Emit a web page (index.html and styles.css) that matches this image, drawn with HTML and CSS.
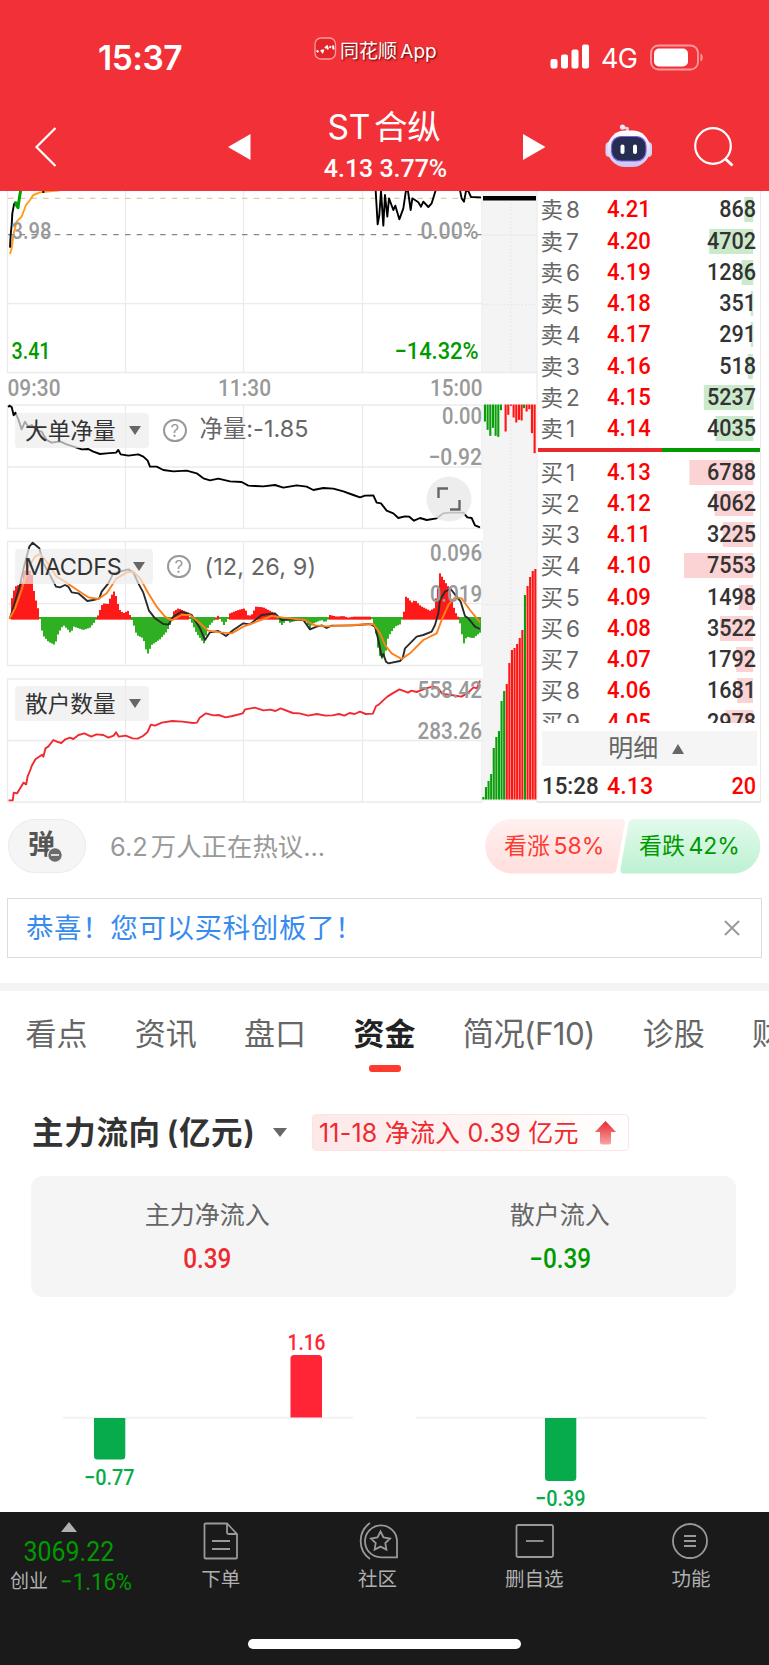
FILE: index.html
```html
<!DOCTYPE html>
<html lang="zh-CN">
<head>
<meta charset="utf-8">
<title>ST合纵</title>
<link rel="stylesheet" href="styles.css">
</head>
<body>
<header class="header">
  <div class="status">
    <span class="clock">15:37</span>
    <span class="app">
      <svg width="23" height="23" viewBox="0 0 23 23"><rect x="1" y="1" width="20.500" height="21" rx="6" fill="#e3242b" stroke="#ff9a9c" stroke-width="1.300"/><path d="M2.500 13.500l2 1.500M7 13l1.500 2 1-2.500M11 11l2-1.500 1 3M16 11l.5-2M19 8.500l.5 4" stroke="#fff" stroke-width="2" fill="none"/></svg>
      同花顺 App
    </span>
    <span class="radio">
      <svg width="40" height="26" viewBox="0 0 40 26" fill="#fff"><rect x="0.500" y="15" width="7" height="9.500" rx="2"/><rect x="11" y="10.500" width="7" height="14" rx="2"/><rect x="21.500" y="5.500" width="7" height="19" rx="2"/><rect x="32" y="0.500" width="7" height="24" rx="2"/></svg>
      <span class="net">4G</span>
      <svg width="54" height="27" viewBox="0 0 54 27"><rect x="1" y="1.500" width="47" height="24" rx="7.500" fill="none" stroke="#fa9a9d" stroke-width="1.800"/><rect x="4" y="4.500" width="34" height="18" rx="5" fill="#fff"/><path d="M50.500 9.500c3 1 3 7 0 8z" fill="#fa9a9d"/></svg>
    </span>
  </div>
  <nav class="titlebar">
    <svg class="back" width="24" height="42" viewBox="0 0 24 42"><path d="M21.500 2L2.500 21l19 19" fill="none" stroke="#fff" stroke-width="2.200"/></svg>
    <svg class="prev" width="23" height="26" viewBox="0 0 23 26"><path d="M22.500 0v26L0 13z" fill="#fff"/></svg>
    <div class="stock"><div class="name">ST 合纵</div><div class="quote">4.13 3.77%</div></div>
    <svg class="next" width="23" height="26" viewBox="0 0 23 26"><path d="M0 0v26l22.500-13z" fill="#fff"/></svg>
    <svg class="robot" width="50" height="44" viewBox="0 0 50 44">
      <defs><linearGradient id="rb" x2="0" y2="1"><stop offset="0" stop-color="#fff"/><stop offset="1" stop-color="#c9c6f2"/></linearGradient></defs>
      <path d="M23.500 9V4.500l-5-1.200" fill="none" stroke="#dcdaf5" stroke-width="2.500"/><circle cx="18.500" cy="3" r="2.600" fill="#e8e6fa"/>
      <rect x="1.500" y="18" width="8" height="15" rx="4" fill="#d4d1f4"/><rect x="40" y="18" width="8" height="15" rx="4" fill="#d4d1f4"/>
      <rect x="3.500" y="6.500" width="42.500" height="36.500" rx="17.500" fill="url(#rb)"/>
      <rect x="7.500" y="12.500" width="34.500" height="24.500" rx="9.500" fill="#252d52" stroke="#7a5fe0" stroke-width="1.200"/>
      <rect x="16.500" y="20.500" width="4" height="9.500" rx="2" fill="#fff"/><rect x="29" y="20.500" width="4" height="9.500" rx="2" fill="#fff"/>
    </svg>
    <svg class="search" width="42" height="42" viewBox="0 0 42 42" fill="none" stroke="#fff" stroke-width="2.200"><circle cx="20" cy="20" r="17.800"/><path d="M32 32.500l7.500 7" stroke-width="2.800"/></svg>
  </nav>
</header>

<main>
<section class="market">
  <div class="charts">
    <svg id="plot" width="538" height="613" viewBox="0 191 538 613">
      <rect x="483" y="191" width="53.500" height="181" fill="#f4f4f4"/>
      <rect x="483" y="404" width="53.500" height="397" fill="#f4f4f4"/>
      <g fill="none" stroke="#ebebeb" stroke-width="1.300">
        <path d="M7.500 191V372.500H537M7.500 303.700H482M125.500 191V372M243.500 191V372M362.500 191V372M482 191V372"/>
        <path d="M7.500 405H482V528.300H7.500zM7.500 467H482M125.500 405V528M243.500 405V528M362.500 405V528"/>
        <path d="M7.500 541.500H482V665.500H7.500zM7.500 603.600H482M125.500 541V665M243.500 541V665M362.500 541V665"/>
        <path d="M7.500 679H482V802H7.500zM7.500 740.500H482M125.500 679V802M243.500 679V802M362.500 679V802"/>
        <path d="M483 235H536M537 191V803" />
        <path d="M510.700 203V372M510.700 405V801M483 304.500H536M483 604.700H536" stroke-dasharray="1.500 2" stroke="#e6e6e6"/>
      </g>
      <path d="M8 198.300H482" stroke="#e3c9a4" stroke-dasharray="5.500 6.200" stroke-width="1.300"/>
      <path d="M8 234.600H482" stroke="#888" stroke-dasharray="5.500 6.200" stroke-width="1.300"/>
      <path d="M483 198.300H536" stroke="#000" stroke-width="4.500"/>
      <g class="ln" transform="translate(0 185) scale(.33333)">
        <polyline stroke="#ff9c1a" points="30,207 35,190 40,150 50,110 65,95 78,60 90,45 100,30 120,22 180,16"/>
        <polyline stroke="#000" points="30,188 32,150 35,120 37,85 42,58 47,50"/>
        <polyline class="thick" stroke="#00a000" points="46,50 50,62 54,68 58,40 62,16"/>
        <path d="M130 17v7" stroke="#000"/>
        <polyline stroke="#000" points="1127,16 1133,118 1138,90 1143,18 1150,122 1155,30 1162,95 1167,40 1180,75 1186,62 1198,103 1210,70 1218,16 1224,18 1232,75 1237,40 1255,52 1263,65 1270,50 1285,66 1295,55 1307,16"/>
        <polyline stroke="#000" points="1380,16 1385,40 1392,50 1398,18 1404,16 1413,36 1443,37"/>
      </g>
      <g class="ln" transform="translate(0 400) scale(.33333)">
        <polyline stroke="#000" points="25,22 28,17 35,21 41,46 46,38 55,58 65,88 75,65 85,80 95,75 110,92 125,95 140,120 155,128 180,124 200,133 230,143 245,148 265,147 280,155 300,162 320,160 348,158 355,150 362,163 385,167 415,163 430,170 443,182 450,200 470,200 490,210 520,214 560,212 590,220 610,235 630,241 655,236 690,244 725,246 745,257 765,258 790,259 825,255 850,263 890,256 920,260 940,270 970,264 1000,266 1030,274 1060,285 1080,292 1095,287 1120,286 1130,308 1143,310 1160,332 1180,340 1195,354 1215,349 1228,350 1242,362 1260,354 1280,360 1310,355 1330,340 1350,338 1390,338 1402,352 1415,354 1425,376 1440,382"/>
      </g>
      <g id="macd" transform="translate(0 400) scale(.33333)"></g>
      <g class="ln" transform="translate(0 400) scale(.33333)">
        <polyline stroke="#2a2a2a" points="30,655 45,605 60,555 72,500 88,440 98,428 118,445 130,490 150,525 168,560 180,562 195,555 205,560 215,577 235,580 262,603 280,600 298,595 305,575 325,550 340,520 360,515 385,508 400,517 415,550 430,578 440,610 447,632 465,655 490,672 505,674 520,650 545,635 575,645 600,685 615,720 630,697 655,693 678,708 700,690 730,670 750,673 785,645 825,640 845,660 870,658 910,660 930,688 950,680 965,676 980,684 995,677 1060,676 1110,672 1125,680 1135,720 1145,770 1150,762 1158,785 1165,790 1200,783 1208,775 1215,745 1230,730 1250,710 1270,705 1295,695 1305,675 1315,640 1320,600 1335,575 1352,567 1370,590 1382,605 1395,648 1405,655 1425,680 1440,687"/>
        <polyline stroke="#ff7f1a" points="28,657 45,625 65,570 85,500 105,470 120,462 140,485 170,530 200,548 235,572 265,592 295,597 320,580 350,535 380,517 400,515 420,535 445,580 470,620 495,650 515,661 545,645 570,645 600,670 625,692 660,697 695,700 730,680 770,665 815,648 850,653 915,660 945,676 980,679 1060,675 1120,672 1140,700 1155,735 1175,760 1205,777 1230,760 1270,720 1310,700 1325,660 1345,615 1365,592 1385,595 1410,630 1440,667"/>
      </g>
      <g class="ln" transform="translate(0 670) scale(.34435 .33333)">
        <polyline stroke="#f02a30" points="25,391 37,391 40,368 50,370 68,338 76,343 80,320 88,300 92,288 103,268 122,254 126,260 132,235 140,230 155,210 165,215 178,219 190,208 203,203 213,207 228,195 245,190 265,200 280,193 300,195 315,203 330,197 337,187 345,200 365,197 385,205 400,206 415,198 428,187 438,164 450,167 470,158 500,153 530,155 560,159 572,158 580,143 598,130 620,136 635,135 655,142 675,138 705,130 712,118 740,113 765,121 785,119 800,123 815,115 850,129 870,130 895,137 920,132 945,137 965,136 985,132 1000,137 1015,129 1030,132 1045,125 1062,132 1083,131 1092,108 1100,104 1112,92 1125,80 1140,70 1160,58 1185,68 1195,62 1210,66 1235,56 1255,50 1270,52 1285,72 1310,75 1340,80 1360,68 1375,52 1385,55 1394,32"/>
      </g>
      <g id="side"></g>
      <g class="axis" font-size="24">
        <text x="11.500" y="238.500" textLength="40" lengthAdjust="spacingAndGlyphs">3.98</text>
        <text x="420.500" y="238.500" textLength="58" lengthAdjust="spacingAndGlyphs">0.00%</text>
        <text class="down" x="11.500" y="358.500" textLength="39" lengthAdjust="spacingAndGlyphs">3.41</text>
        <text class="down" x="394.500" y="358.500" textLength="84" lengthAdjust="spacingAndGlyphs">−14.32%</text>
        <text x="7.500" y="396" textLength="53" lengthAdjust="spacingAndGlyphs">09:30</text>
        <text x="218" y="396" textLength="53" lengthAdjust="spacingAndGlyphs">11:30</text>
        <text x="430" y="396" textLength="52.500" lengthAdjust="spacingAndGlyphs">15:00</text>
        <text x="442" y="424" textLength="40" lengthAdjust="spacingAndGlyphs">0.00</text>
        <text x="428.500" y="465" textLength="53.500" lengthAdjust="spacingAndGlyphs">−0.92</text>
        <text x="430" y="561" textLength="52" lengthAdjust="spacingAndGlyphs">0.096</text>
        <text x="430" y="602" textLength="52" lengthAdjust="spacingAndGlyphs">0.019</text>
        <text x="417.500" y="698" textLength="64.500" lengthAdjust="spacingAndGlyphs">558.42</text>
        <text x="417.500" y="739" textLength="64.500" lengthAdjust="spacingAndGlyphs">283.26</text>
      </g>
    </svg>
    <div class="tool t1"><span class="chip">大单净量<i></i></span><span class="help">?</span><span class="par">净量:-1.85</span></div>
    <div class="tool t2"><span class="chip lat">MACDFS<i></i></span><span class="help">?</span><span class="par">(12, 26, 9)</span></div>
    <div class="tool t3"><span class="chip">散户数量<i></i></span></div>
    <svg class="expand" width="46" height="46" viewBox="0 0 46 46"><circle cx="23" cy="23" r="22.500" fill="#e9e9e9" fill-opacity=".82"/><path d="M12.500 22v-9.500h9.500M33.500 24v9.500H24" fill="none" stroke="#666" stroke-width="2.400"/></svg>
  </div>
  <div class="book">
    <div class="levels">
      <div class="row ask"><span>卖 8</span><b>4.21</b><em style="--w:9px">868</em></div>
      <div class="row ask"><span>卖 7</span><b>4.20</b><em style="--w:44px">4702</em></div>
      <div class="row ask"><span>卖 6</span><b>4.19</b><em style="--w:12px">1286</em></div>
      <div class="row ask"><span>卖 5</span><b>4.18</b><em style="--w:3px">351</em></div>
      <div class="row ask"><span>卖 4</span><b>4.17</b><em style="--w:3px">291</em></div>
      <div class="row ask"><span>卖 3</span><b>4.16</b><em style="--w:5px">518</em></div>
      <div class="row ask"><span>卖 2</span><b>4.15</b><em style="--w:50px">5237</em></div>
      <div class="row ask"><span>卖 1</span><b>4.14</b><em style="--w:38px">4035</em></div>
      <div class="ratio"><i></i></div>
      <div class="row bid"><span>买 1</span><b>4.13</b><em style="--w:64px">6788</em></div>
      <div class="row bid"><span>买 2</span><b>4.12</b><em style="--w:39px">4062</em></div>
      <div class="row bid"><span>买 3</span><b>4.11</b><em style="--w:31px">3225</em></div>
      <div class="row bid"><span>买 4</span><b>4.10</b><em style="--w:71px">7553</em></div>
      <div class="row bid"><span>买 5</span><b>4.09</b><em style="--w:14px">1498</em></div>
      <div class="row bid"><span>买 6</span><b>4.08</b><em style="--w:33px">3522</em></div>
      <div class="row bid"><span>买 7</span><b>4.07</b><em style="--w:17px">1792</em></div>
      <div class="row bid"><span>买 8</span><b>4.06</b><em style="--w:16px">1681</em></div>
      <div class="row bid"><span>买 9</span><b>4.05</b><em style="--w:28px">2978</em></div>
    </div>
    <div class="detail">明细<i></i></div>
    <div class="trade"><span>15:28</span><b>4.13</b><em>20</em></div>
  </div>
</section>

<section class="talk">
  <span class="danmu">弹<svg width="16" height="16" viewBox="0 0 16 16"><circle cx="8" cy="8" r="7.300" fill="#6b6b6b" stroke="#f5f5f5" stroke-width="1.200"/><path d="M4 8h8" stroke="#fff" stroke-width="1.500"/></svg></span>
  <span class="hot">6.2 万人正在热议...</span>
  <div class="vote">
    <svg width="276" height="55" viewBox="0 0 277 55" preserveAspectRatio="none">
      <defs>
        <linearGradient id="vr" x2="0" y2="1"><stop offset="0" stop-color="#fff0ef"/><stop offset="1" stop-color="#ffdfdd"/></linearGradient>
        <linearGradient id="vg" x2="0" y2="1"><stop offset="0" stop-color="#e3faec"/><stop offset="1" stop-color="#bdf1d2"/></linearGradient>
      </defs>
      <path d="M27.500 0H136q5 0 4.300 4.500L132 50.500q-1 4-5 4H27.500a27.200 27.200 0 0 1 0-54.500z" fill="url(#vr)"/>
      <path d="M249 0H149q-4 0-5 4L136 50q-.8 4.500 4 4.500H249a27.200 27.200 0 0 0 0-54.500z" fill="url(#vg)"/>
    </svg>
    <div class="votes"><span class="up">看涨 58%</span><span class="dn">看跌 42%</span></div>
  </div>
</section>

<section class="notice"><span>恭喜！您可以买科创板了！</span><svg width="18" height="18" viewBox="0 0 18 18"><path d="M2 2l14 14M16 2L2 16" stroke="#999" stroke-width="1.900"/></svg></section>

<nav class="tabs"><span>看点</span><span>资讯</span><span>盘口</span><span class="on">资金</span><span class="wide">简况(F10)</span><span>诊股</span><span>财务</span></nav>

<section class="flow">
  <div class="flowhead"><h2>主力流向 (亿元)</h2><i class="caret"></i>
    <span class="badge">11-18 净流入 0.39 亿元
      <svg width="21" height="24" viewBox="0 0 21 24"><defs><linearGradient id="ar" x2="0" y2="1"><stop offset="0" stop-color="#e8282d"/><stop offset="1" stop-color="#f7a5a5"/></linearGradient></defs><path d="M10.500 0L21 11h-5v10.500q0 2-2 2H7q-2 0-2-2V11H0z" fill="url(#ar)"/></svg>
    </span>
  </div>
  <div class="summary">
    <div><span>主力净流入</span><b class="r">0.39</b></div>
    <div><span>散户流入</span><b class="g">−0.39</b></div>
  </div>
  <svg class="bars" width="769" height="215" viewBox="0 1297 769 215">
    <path d="M63 1417.700H353M415.500 1417.700H706" stroke="#f2f2f2" stroke-width="2"/>
    <path d="M94 1418h31.300v38q0 3.500-3.500 3.500H97.500q-3.500 0-3.500-3.500z" fill="#08ab4b"/>
    <path d="M290.500 1417.500v-59q0-3.500 3.500-3.500h24.500q3.500 0 3.500 3.500v59z" fill="#ff2436"/>
    <path d="M545 1418h31.300v59.500q0 3.500-3.500 3.500H548.500q-3.500 0-3.500-3.500z" fill="#08ab4b"/>
    <g class="val" font-size="22">
      <text x="287.500" y="1350" textLength="38" lengthAdjust="spacingAndGlyphs" fill="#ff2436">1.16</text>
      <text x="84" y="1485.300" textLength="50.500" lengthAdjust="spacingAndGlyphs" fill="#08ab4b">−0.77</text>
      <text x="535" y="1506" textLength="50.500" lengthAdjust="spacingAndGlyphs" fill="#08ab4b">−0.39</text>
    </g>
  </svg>
</section>
</main>

<footer class="bottom">
  <div class="menu">
    <div class="index"><i></i><b>3069.22</b><div><span>创业</span><em>−1.16%</em></div></div>
    <div class="item"><svg width="40" height="40" viewBox="0 0 40 40"><path d="M4.500 2.500H26l10 10.500v23.500q0 1-1 1H4.500q-1 0-1-1v-33q0-1 1-1zM26 2.500V11.500q0 1.500 1.500 1.500H36M11 20h18M11 28h18"/></svg><span>下单</span></div>
    <div class="item"><svg width="42" height="40" viewBox="0 0 42 40"><path d="M40 36.300H24A16 16 0 1 1 40 20zM13 2A22 22 0 0 0 13 38M23.500 10.500l3 6 6.500 1-4.700 4.600 1.100 6.500-5.900-3-5.900 3 1.100-6.500L14 17.500l6.500-1z"/></svg><span>社区</span></div>
    <div class="item"><svg width="40" height="40" viewBox="0 0 40 40"><rect x="2.500" y="4" width="36.500" height="32" rx="1.500"/><path d="M12 20h17.500"/></svg><span>删自选</span></div>
    <div class="item"><svg width="40" height="40" viewBox="0 0 40 40"><circle cx="19" cy="20" r="17"/><path d="M13 15h12M13 20h12M13 25h12"/></svg><span>功能</span></div>
  </div>
  <div class="home"></div>
</footer>
<script src="charts.js"></script>
</body>
</html>
```

FILE: styles.css
```css
* { box-sizing: border-box; }
body { margin: 0; width: 769px; height: 1665px; overflow: hidden; background: #fff; color: #333; font-family: Inter, "Noto Sans CJK SC", sans-serif; display: flex; flex-direction: column; }
svg { display: block; flex: none; }
i, em { font-style: normal; }
b { font-weight: 500; }
main { height: 1321px; flex: none; overflow: hidden; }

.header { height: 191px; flex: none; background: #f23037; color: #fff; }
.status { height: 106px; padding-top: 36px; display: grid; grid-template-columns: 314px 236px 1fr; }
.clock { padding: 2px 0 0 98px; font-size: 33.500px; font-weight: 600; line-height: 40px; letter-spacing: -0.5px; }
.app { display: flex; gap: 3px; height: 26px; align-items: center; font-size: 19px; white-space: nowrap; word-spacing: -2px; text-shadow: 1px 1px 2px #5a0000; }
.app svg { margin-top: -2px; }
.radio { display: flex; align-items: center; height: 42px; }
.net { margin: 3px 12px 0 11px; width: 37px; font-size: 27px; letter-spacing: -0.8px; }
.titlebar { display: flex; height: 85px; padding-left: 34px; align-items: flex-start; }
.back { margin-top: 20px; }
.prev { margin: 28px 0 0 170px; }
.stock { width: 272px; text-align: center; white-space: nowrap; }
.name { font-size: 33.500px; line-height: 42px; word-spacing: -5px; padding-right: 6px; letter-spacing: -0.3px; }
.quote { font: 500 26.500px/30px Roboto, sans-serif; margin: 5px 3px 0 0; transform: scaleX(.94); }
.next { margin-top: 28px; }
.robot { margin: 18px 0 0 58px; }
.search { margin: 20px 0 0 39px; }

.market { display: flex; height: 613px; }
.charts { position: relative; width: 537px; flex: none; }
.ln { fill: none; stroke-width: 1.900; stroke-linejoin: round; }
.ln > * { vector-effect: non-scaling-stroke; }
.ln .thick { stroke-width: 3; }
.axis { font-family: Roboto, sans-serif; font-weight: 500; fill: #999; }
.axis .down { fill: #009a00; }
.tool { position: absolute; left: 15px; display: flex; align-items: center; height: 35px; }
.t1 { top: 222px; }
.t2 { top: 358px; }
.t3 { top: 495px; }
.chip { width: 134px; height: 35px; padding: 0 8px 0 10px; border-radius: 4px; background: rgba(236,236,236,.7); display: flex; align-items: center; justify-content: space-between; font-size: 22.700px; line-height: 33px; color: #333; }
.lat { width: 138px; font-size: 23.500px; padding-left: 9px; letter-spacing: -0.4px; }
.chip i, .caret { border: 6.500px solid transparent; border-top: 9px solid #666; border-bottom: 0; }
.help { width: 23.500px; height: 23.500px; margin-left: 14px; border: 2px solid #999; border-radius: 50%; color: #999; font-size: 17px; line-height: 20px; text-align: center; }
.par { margin-left: 13px; font-size: 23.300px; line-height: 31px; padding-bottom: 4px; letter-spacing: 0.1px; color: #666; white-space: nowrap; }
.t2 .par { margin-left: 14px; padding-bottom: 0; font-size: 23.500px; }
.expand { position: absolute; left: 426px; top: 285px; }

.book { width: 223.500px; border-right: 1.500px solid #e8e8e8; border-bottom: 2px solid #e8e8e8; height: 612px; }
.levels { height: 532px; padding-top: 3.300px; overflow: hidden; }
.row, .trade { display: grid; grid-template-columns: 65px 1fr 80px; height: 31.250px; padding: 0 3.500px 0 4.500px; align-items: center; font: 500 24px/31px Roboto, sans-serif; }
.row span { font: 400 22.500px/31px Inter, "Noto Sans CJK SC", sans-serif; color: #666; white-space: nowrap; word-spacing: -2.500px; letter-spacing: -0.4px; margin-left: -1px; }
.row b, .trade b { color: #f00; transform: scaleX(.92); transform-origin: left; }
.row em, .trade em { text-align: right; transform: scaleX(.9); transform-origin: right; color: #333; line-height: 25px; background: linear-gradient(#cbeacb, #cbeacb) right 3px top / calc(var(--w) * 1.11) 100% no-repeat; }
.row.bid em { background-image: linear-gradient(#fbd3d5, #fbd3d5); }
.ratio { height: 4px; margin: 3.600px 0 4.500px 1px; background: #009a00; }
.ratio i { display: block; width: 124px; height: 4px; background: #e8282d; }
.detail { height: 35px; margin: 8px 3px 0 5px; padding-right: 6px; background: #f5f5f5; display: flex; align-items: center; justify-content: center; gap: 14px; font-size: 25px; line-height: 33px; color: #666; }
.detail i { border: 6.500px solid transparent; border-bottom: 10px solid #666; border-top: 0; }
.trade { height: 41px; line-height: 41px; }
.trade span { transform: scaleX(.93); transform-origin: left; }
.trade b { transform: scaleX(.97); }
.trade em { background: none; color: #f00; }

.talk { display: flex; height: 80px; padding: 15px 0 0 8px; align-items: flex-start; }
.danmu { width: 78px; height: 54px; border: 1.500px solid #ebebeb; border-radius: 27px; background: #f5f5f5; display: flex; padding-left: 19px; font-size: 27px; line-height: 49px; font-weight: 700; color: #555; }
.danmu svg { margin: 27px 0 0 -8px; }
.hot { margin-left: 24px; width: 375px; font-size: 25.400px; line-height: 55px; color: #999; word-spacing: -4px; }
.vote { position: relative; width: 276px; }
.votes { position: absolute; inset: 0; display: flex; font-size: 23px; line-height: 55px; white-space: nowrap; word-spacing: -3px; }
.up { padding-left: 19px; width: 154px; color: #ff3b30; }
.dn { color: #009a00; }

.notice { height: 60px; margin: 14px 7px 25px; border: 1.500px solid #ddd; padding: 0 20px 0 18px; display: flex; align-items: center; justify-content: space-between; font-size: 27.500px; letter-spacing: 0.6px; line-height: 56px; color: #388bee; }

.tabs { border-top: 8px solid #f4f4f4; height: 99px; padding-left: 25.500px; display: flex; gap: 47px; font-size: 31px; line-height: 86px; color: #666; white-space: nowrap; overflow: hidden; }
.tabs span { width: 62.300px; flex: none; }
.tabs .wide { width: 133px; font-size: 31.300px; letter-spacing: -0.6px; }
.tabs .on { color: #222; font-weight: 700; position: relative; }
.tabs .on::after { content: ""; position: absolute; left: 15.500px; top: 74px; width: 32px; height: 6.500px; border-radius: 3px; background: #ff3b30; }

.flow { padding-top: 32px; }
.flowhead { display: flex; height: 37px; padding-left: 32px; align-items: center; }
h2 { margin: 0; width: 226px; font-size: 31.500px; line-height: 37px; font-weight: 600; white-space: nowrap; letter-spacing: 0.7px; word-spacing: -3px; }
.caret { margin-left: 15px; margin-right: 25px; border-width: 9px 7.500px 0; }
.badge { width: 317px; height: 37px; display: flex; align-items: center; justify-content: space-between; padding: 0 12px 0 6px; border: 1.500px solid #fde4e4; border-radius: 4px; background: linear-gradient(90deg, #fde8e8, #fff); color: #ee2a2f; font-size: 25px; line-height: 34px; white-space: nowrap; letter-spacing: 0.2px; }
.summary { display: grid; grid-template-columns: 1fr 1fr; height: 121px; margin: 25px 33px 0 31px; padding-top: 20px; border-radius: 12px; background: #f5f5f5; text-align: center; }
.summary span { display: block; font-size: 25px; line-height: 38px; color: #666; }
.summary b { display: block; margin-top: 9px; font: 500 27px/32px Roboto, sans-serif; transform: scaleX(.9); }
.r { color: #ee2a2f; }
.g { color: #009a00; }
.val { font-family: Roboto, sans-serif; font-weight: 500; }

.bottom { height: 153px; flex: none; background: #1a1a1a; color: #b0b0b0; }
.menu { display: flex; height: 127px; }
.index { width: 142px; padding-top: 10px; display: flex; flex-direction: column; align-items: center; }
.index > i { border: 8.500px solid transparent; border-bottom: 10px solid #b0b0b0; border-top: 0; margin-right: 5px; }
.index b { font: 400 28px/36px Roboto, sans-serif; color: #009a00; transform: scaleX(.89); margin: 2px 4px 0 0; }
.index div { display: flex; align-items: center; height: 24px; gap: 12px; }
.index span { font-size: 19px; line-height: 22px; }
.index em { font: 400 24px/22px Roboto, sans-serif; color: #009a00; transform: scaleX(.92); margin-right: -3px; margin-left: -3px; }
.item { width: 156.700px; padding: 9px 0 0 1px; display: flex; flex-direction: column; align-items: center; font-size: 19.500px; }
.item svg { fill: none; stroke: #999; stroke-width: 1.800; }
.item span { margin-top: 5px; line-height: 26px; }
.home { width: 273px; height: 10px; margin-left: 248px; border-radius: 5px; background: #fff; }
```

FILE: charts.js
```js
(function () {
  var NS = 'http://www.w3.org/2000/svg';
  function rect(parent, x, y, w, h, fill) {
    var r = document.createElementNS(NS, 'rect');
    r.setAttribute('x', x);
    r.setAttribute('y', y);
    r.setAttribute('width', w);
    r.setAttribute('height', h);
    r.setAttribute('fill', fill);
    parent.appendChild(r);
  }

  // MACD histogram: bars sampled along an envelope around the zero line
  var env = [30,655,32,610,45,560,65,550,72,512,95,512,98,550,105,590,118,640,120,655,122,665,128,705,145,725,165,735,175,700,190,675,205,690,212,700,222,680,250,690,270,683,285,665,292,652,300,630,308,610,325,612,332,590,345,570,350,600,360,630,370,640,385,632,392,650,400,670,410,705,430,715,442,765,455,735,480,718,500,695,515,665,520,635,535,625,565,638,570,655,590,700,612,730,625,680,645,658,652,645,660,655,672,675,685,655,690,640,715,630,735,625,745,648,755,645,768,620,790,622,825,640,833,658,845,676,860,660,870,668,895,660,915,660,930,685,940,670,965,660,975,667,985,658,990,645,1010,650,1030,648,1045,653,1060,650,1110,650,1115,655,1125,680,1135,750,1143,778,1155,770,1165,710,1185,680,1203,672,1207,655,1212,635,1218,590,1225,595,1235,608,1245,600,1262,618,1290,632,1302,625,1315,560,1320,520,1335,545,1345,560,1357,610,1370,645,1378,655,1382,685,1392,730,1400,710,1420,715,1440,698];
  var macd = document.getElementById('macd');
  var zero = 655, k = 0;
  for (var x = 30; x <= 1440; x += 6) {
    while (k + 2 < env.length - 2 && env[k + 2] < x) k += 2;
    var t = (x - env[k]) / (env[k + 2] - env[k]);
    var y = env[k + 1] + t * (env[k + 3] - env[k + 1]);
    var up = y < zero;
    rect(macd, x - 3, up ? y : zero - 4, 6, Math.max(6, Math.abs(y - zero) + 4), up ? '#ff1a1a' : '#2eb022');
  }

  var side = document.getElementById('side');
  var green = '#0a9f0a', red = '#ff1414';
  // after-hours order imbalance, hanging from the top edge
  [[660,65],[668,90],[676,108],[684,84],[692,108],[700,111],[708,31],[722,95,1],[730,45,1],[738,18,1],[746,53,1],[754,68,1],[762,60,1],[770,62,1],[777,25],[785,35,1],[793,28,1],[801,100,1],[809,160,1]].forEach(function (d) {
    rect(side, 265 + d[0] / 3 - 1.1, 404.5, 2.1, (d[1] - 14) / 3, d[2] ? red : green);
  });
  // cumulative volume, standing on the bottom edge
  [797,787,781,774,748,737,731,701,691,684,663,650,648,644,638,630,595,586,577,571,569].forEach(function (top, i) {
    rect(side, 482.3 + 2.6 * i, top, 2.1, 799.5 - top, i < 9 || i === 16 ? green : red);
  });
})();
```
